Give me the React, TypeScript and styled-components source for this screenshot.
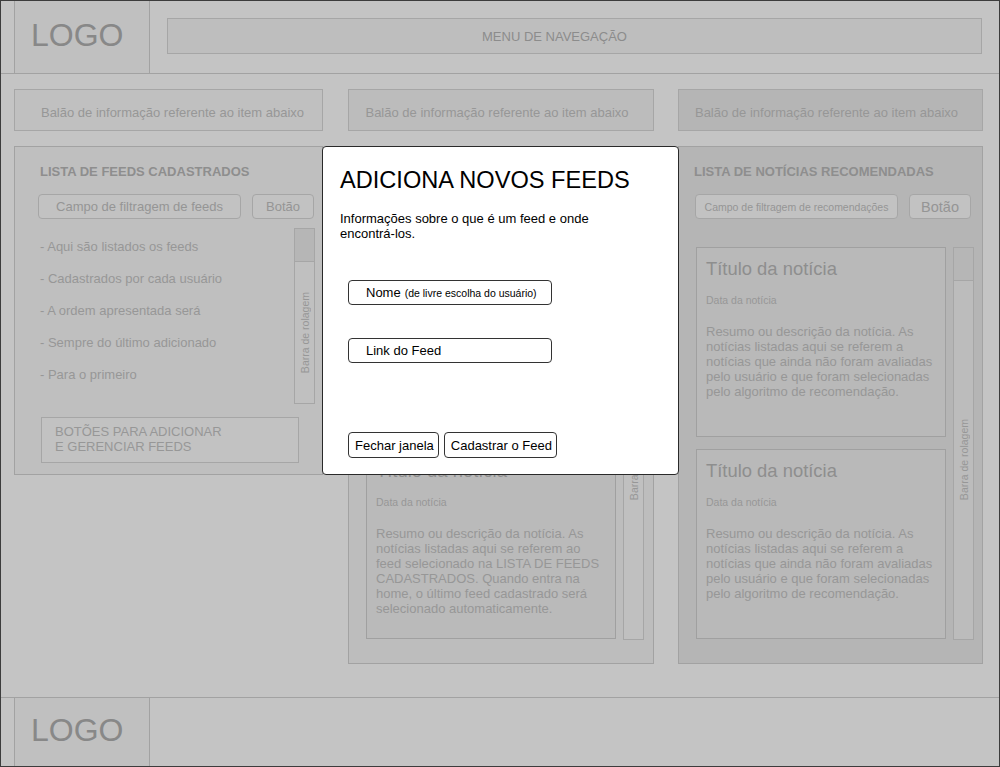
import React from "react";
import styled, { createGlobalStyle } from "styled-components";

const GlobalStyle = createGlobalStyle`
  html, body {
    margin: 0;
    padding: 0;
    background: #c4c4c4;
    font-family: "Liberation Sans", Arial, sans-serif;
  }
  * { box-sizing: border-box; }
`;

const recommendedSummary = [
  "Resumo ou descrição da notícia. As",
  "notícias listadas aqui se referem a",
  "notícias que ainda não foram avaliadas",
  "pelo usuário e que foram selecionadas",
  "pelo algoritmo de recomendação.",
];

const feedSummary = [
  "Resumo ou descrição da notícia. As",
  "notícias listadas aqui se referem ao",
  "feed selecionado na LISTA DE FEEDS",
  "CADASTRADOS. Quando entra na",
  "home, o último feed cadastrado será",
  "selecionado automaticamente.",
];

const feedItems = [
  "- Aqui são listados os feeds",
  "- Cadastrados por cada usuário",
  "- A ordem apresentada será",
  "- Sempre do último adicionado",
  "- Para o primeiro",
];

const NewsCard: React.FC<{ lines?: string[]; tone?: "mid" | "dark" }> = ({ lines, tone = "mid" }) => (
  <Card $tone={tone}>
    {lines && (
      <>
        <CardTitle>Título da notícia</CardTitle>
        <CardDate>Data da notícia</CardDate>
        <CardSummary>
          {lines.map((l, i) => (
            <div key={i}>{l}</div>
          ))}
        </CardSummary>
      </>
    )}
  </Card>
);

const ScrollBar: React.FC<{ tone?: "mid" | "dark" }> = ({ tone = "mid" }) => (
  <Scroll $tone={tone}>
    <Thumb />
    <Track>
      <VerticalLabel>Barra de rolagem</VerticalLabel>
    </Track>
  </Scroll>
);

const App: React.FC = () => {
  return (
    <>
      <GlobalStyle />
      <Frame>
        <Header>
          <LogoBox>LOGO</LogoBox>
          <Menu>MENU DE NAVEGAÇÃO</Menu>
        </Header>

        <Main>
          <Balloon $fill="#c0c0c0" $shift={4}>
            Balão de informação referente ao item abaixo
          </Balloon>
          <Balloon $fill="#bcbcbc" $shift={-4}>
            Balão de informação referente ao item abaixo
          </Balloon>
          <Balloon $fill="#b5b5b5" $shift={-4}>
            Balão de informação referente ao item abaixo
          </Balloon>

          <FeedsPanel>
            <PanelTitle>LISTA DE FEEDS CADASTRADOS</PanelTitle>
            <FilterRow>
              <FilterField>Campo de filtragem de feeds</FilterField>
              <GhostButton>Botão</GhostButton>
            </FilterRow>
            <FeedList>
              <FeedItems>
                {feedItems.map((f) => (
                  <FeedItem key={f}>{f}</FeedItem>
                ))}
              </FeedItems>
              <ScrollBar />
            </FeedList>
            <ActionsBox>
              BOTÕES PARA ADICIONAR
              <br />E GERENCIAR FEEDS
            </ActionsBox>
          </FeedsPanel>

          {/* the top of this panel sits under the modal */}
          <NewsPanel $fill="#bdbdbd" $hiddenHead>
            <CardsArea>
              <Cards>
                <NewsCard />
                <NewsCard lines={feedSummary} />
              </Cards>
              <ScrollBar />
            </CardsArea>
          </NewsPanel>

          <NewsPanel $fill="#b5b5b5">
            <PanelTitle>LISTA DE NOTÍCIAS RECOMENDADAS</PanelTitle>
            <FilterRow>
              <FilterField $small>Campo de filtragem de recomendações</FilterField>
              <GhostButton $big>Botão</GhostButton>
            </FilterRow>
            <CardsArea>
              <Cards>
                <NewsCard lines={recommendedSummary} tone="dark" />
                <NewsCard lines={recommendedSummary} tone="dark" />
              </Cards>
              <ScrollBar tone="dark" />
            </CardsArea>
          </NewsPanel>
        </Main>

        <Footer>
          <LogoBox>LOGO</LogoBox>
        </Footer>

        <Modal>
          <ModalTitle>ADICIONA NOVOS FEEDS</ModalTitle>
          <ModalInfo>
            Informações sobre o que é um feed e onde
            <br />
            encontrá-los.
          </ModalInfo>
          <Field $gap={39}>
            Nome <Hint>(de livre escolha do usuário)</Hint>
          </Field>
          <Field $gap={33}>Link do Feed</Field>
          <ModalActions>
            <ModalButton>Fechar janela</ModalButton>
            <ModalButton>Cadastrar o Feed</ModalButton>
          </ModalActions>
        </Modal>
      </Frame>
    </>
  );
};

export default App;

const Frame = styled.div`
  position: relative;
  width: 1000px;
  height: 767px;
  border: 1px solid #3c3c3c;
  background: #c4c4c4;
  display: flex;
  flex-direction: column;
  overflow: hidden;
`;

const Header = styled.header`
  height: 73px;
  flex: none;
  display: flex;
  align-items: flex-start;
  padding-left: 13px;
  border-bottom: 1px solid #a2a2a2;
`;

const LogoBox = styled.div`
  width: 136px;
  height: 100%;
  display: flex;
  align-items: center;
  padding-left: 16px;
  padding-bottom: 4px;
  background: #c0c0c0;
  border-left: 1px solid #a2a2a2;
  border-right: 1px solid #a2a2a2;
  font-size: 32px;
  color: #888888;
`;

const Menu = styled.div`
  margin-top: 17px;
  margin-left: 17px;
  width: 815px;
  height: 36px;
  display: flex;
  align-items: center;
  justify-content: center;
  padding-right: 40px;
  background: #bebebe;
  border: 1px solid #a6a6a6;
  font-size: 13px;
  color: #8c8c8c;
`;

const Main = styled.main`
  flex: 1;
  display: grid;
  grid-template-columns: 309px 306px 304px;
  grid-template-rows: 42px auto;
  column-gap: 25px;
  row-gap: 15px;
  align-items: start;
  padding: 15px 0 0 13px;
  & > :nth-child(3n) {
    margin-left: -1px;
  }
`;

const Balloon = styled.div<{ $fill: string; $shift: number }>`
  height: 42px;
  display: flex;
  align-items: center;
  justify-content: center;
  padding-top: 4px;
  padding-left: ${(p) => Math.max(p.$shift, 0) * 2}px;
  padding-right: ${(p) => Math.max(-p.$shift, 0) * 2}px;
  background: ${(p) => p.$fill};
  border: 1px solid #a6a6a6;
  font-size: 13px;
  color: #979797;
`;

const Panel = styled.section`
  display: flex;
  flex-direction: column;
  border: 1px solid #a2a2a2;
  padding-top: 16px;
`;

const FeedsPanel = styled(Panel)`
  height: 329px;
  padding-left: 23px;
  padding-right: 7px;
  background: #bfbfbf;
  & > h3 {
    margin-left: 2px;
  }
`;

const NewsPanel = styled(Panel)<{ $fill: string; $hiddenHead?: boolean }>`
  height: 518px;
  padding-left: 15px;
  padding-right: 7px;
  padding-top: ${(p) => (p.$hiddenHead ? "100px" : "16px")};
  background: ${(p) => p.$fill};
`;

const PanelTitle = styled.h3`
  margin: 0;
  padding-top: 1px;
  font-size: 13px;
  line-height: 16px;
  font-weight: bold;
  color: #8e8e8e;
`;

const FilterRow = styled.div`
  margin-top: 14px;
  display: flex;
  gap: 11px;
  height: 25px;
  ${NewsPanel} & {
    margin-left: 1px;
  }
`;

const FilterField = styled.div<{ $small?: boolean }>`
  width: 203px;
  height: 25px;
  display: flex;
  align-items: center;
  justify-content: center;
  background: #c2c2c2;
  border: 1px solid #a6a6a6;
  border-radius: 4px;
  font-size: ${(p) => (p.$small ? "10.5px" : "13px")};
  color: #959595;
`;

const GhostButton = styled.div<{ $big?: boolean }>`
  width: 62px;
  height: 25px;
  display: flex;
  align-items: center;
  justify-content: center;
  background: #c2c2c2;
  border: 1px solid #a6a6a6;
  border-radius: 4px;
  font-size: ${(p) => (p.$big ? "14.5px" : "13px")};
  color: #959595;
`;

const FeedList = styled.div`
  margin-top: 9px;
  height: 176px;
  display: flex;
  justify-content: space-between;
  width: 277px;
`;

const FeedItems = styled.ul`
  list-style: none;
  margin: 0;
  padding: 3px 0 0 2px;
`;

const FeedItem = styled.li`
  font-size: 13px;
  line-height: 32px;
  color: #979797;
`;

const ActionsBox = styled.div`
  margin: 13px 0 0 3px;
  width: 258px;
  height: 46px;
  padding: 6px 0 0 13px;
  background: #c2c2c2;
  border: 1px solid #a6a6a6;
  font-size: 13px;
  line-height: 15px;
  color: #979797;
`;

const CardsArea = styled.div`
  margin-top: 28px;
  margin-left: 2px;
  display: flex;
  gap: 7px;
  height: 393px;
  ${NewsPanel} > &:first-child {
    margin-top: 0;
  }
`;

const Cards = styled.div`
  display: flex;
  flex-direction: column;
  gap: 12px;
`;

const Card = styled.article<{ $tone: "mid" | "dark" }>`
  width: 250px;
  height: 190px;
  padding: 10px 0 0 9px;
  background: ${(p) => (p.$tone === "dark" ? "#b9b9b9" : "#bababa")};
  border: 1px solid #a0a0a0;
`;

const CardTitle = styled.h4`
  margin: 0;
  font-size: 18.4px;
  line-height: 21px;
  font-weight: normal;
  color: #8e8e8e;
`;

const CardDate = styled.div`
  margin-top: 15px;
  font-size: 10.5px;
  line-height: 13px;
  color: #979797;
`;

const CardSummary = styled.div`
  margin-top: 17px;
  font-size: 13px;
  line-height: 15px;
  color: #979797;
  white-space: nowrap;
`;

const Scroll = styled.div<{ $tone: "mid" | "dark" }>`
  width: 21px;
  height: 100%;
  display: flex;
  flex-direction: column;
  background: ${(p) => (p.$tone === "dark" ? "#bcbcbc" : "#c0c0c0")};
  border: 1px solid #a6a6a6;
`;

const Thumb = styled.div`
  height: 33px;
  flex: none;
  background: #b6b6b6;
  border-bottom: 1px solid #a6a6a6;
`;

const Track = styled.div`
  flex: 1;
  display: flex;
  align-items: center;
  justify-content: center;
`;

const VerticalLabel = styled.span`
  writing-mode: vertical-rl;
  transform: rotate(180deg);
  font-size: 10.5px;
  color: #979797;
  white-space: nowrap;
`;

const Footer = styled.footer`
  height: 69px;
  flex: none;
  display: flex;
  padding-left: 13px;
  border-top: 1px solid #a2a2a2;
`;

const Modal = styled.div`
  position: absolute;
  left: 321px;
  top: 145px;
  width: 357px;
  height: 329px;
  display: flex;
  flex-direction: column;
  align-items: flex-start;
  padding: 19px 0 0 17px;
  background: #ffffff;
  border: 1px solid #2a2a2a;
  border-radius: 4px;
  color: #000000;
`;

const ModalTitle = styled.h2`
  margin: 0;
  font-size: 23.6px;
  line-height: 28px;
  font-weight: normal;
`;

const ModalInfo = styled.p`
  margin: 17px 0 0;
  font-size: 13px;
  line-height: 15px;
`;

const Field = styled.div<{ $gap: number }>`
  margin: ${(p) => p.$gap}px 0 0 8px;
  width: 204px;
  height: 25px;
  display: flex;
  align-items: center;
  gap: 4px;
  padding-left: 17px;
  border: 1px solid #333333;
  border-radius: 4px;
  font-size: 13px;
`;

const Hint = styled.span`
  font-size: 10.5px;
`;

const ModalActions = styled.div`
  margin: 69px 0 0 8px;
  display: flex;
  gap: 5px;
`;

const ModalButton = styled.button`
  height: 26px;
  padding: 0 4px 0 6px;
  background: #ffffff;
  border: 1px solid #333333;
  border-radius: 4px;
  font-family: "Liberation Sans", Arial, sans-serif;
  font-size: 13px;
  color: #000000;
`;
